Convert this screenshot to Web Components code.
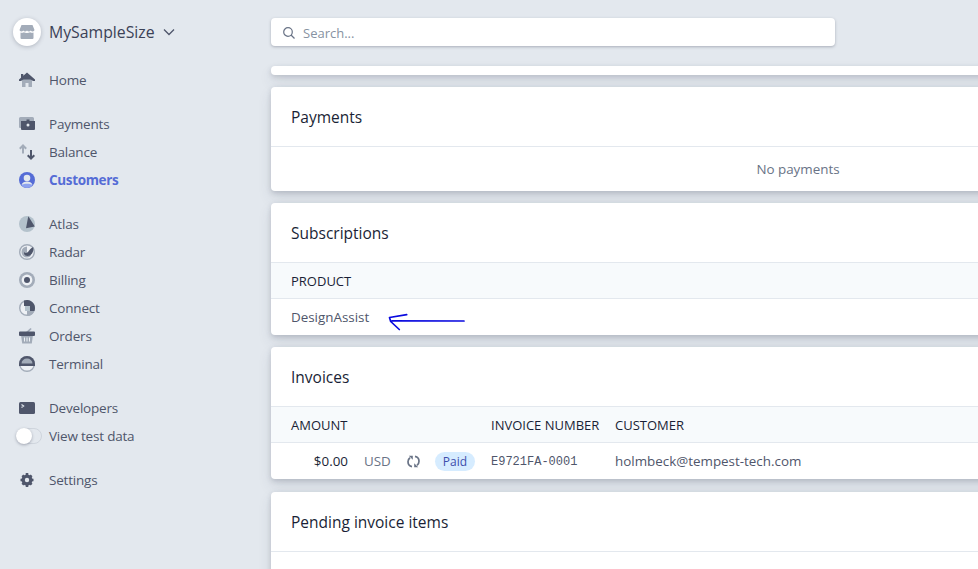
<!DOCTYPE html>
<html lang="en">
<head>
<meta charset="utf-8">
<title>Customer</title>
<style>
  html, body { margin: 0; height: 100%; overflow: hidden; background: #e3e8ee; }
  body { font-family: "Open Sans", "Noto Sans", sans-serif; font-size: 14px; color: #4f566b; }
</style>
</head>
<body>
<app-shell>
  <side-nav slot="nav"></side-nav>
  <search-box slot="search"></search-box>
  <data-card stub></data-card>
  <data-card title="Payments"><p-empty>No payments</p-empty></data-card>
  <data-card title="Subscriptions"><product-table></product-table></data-card>
  <data-card title="Invoices"><invoice-table></invoice-table></data-card>
  <data-card title="Pending invoice items" style="margin-top:1px"><div style="height:80px"></div></data-card>
</app-shell>

<script>
  const ICONS = {
    home: `<path fill="#a3acb9" d="M3 7h10v8H9.500v-4h-3v4H3z"/><path fill="#4f566b" d="M8 .5 16 7.500V9H14L8 4.500 2 9H0V7.500l2-1.800V2h2.300v1.700z"/><path fill="#4f566b" d="M8 2 14 7.500H2z"/>`,
    payments: `<path fill="#a3acb9" d="M0 2.500A1.500 1.500 0 0 1 1.500 1h12A1.500 1.500 0 0 1 15 2.500V5H2v7H1a1 1 0 0 1-1-1z"/><path fill="#4f566b" fill-rule="evenodd" d="M2 5h14v8a1 1 0 0 1-1 1H3a1 1 0 0 1-1-1zm7 2.500a1.500 1.500 0 1 0 0 3 1.500 1.500 0 0 0 0-3zM7.500 3.500h3V5h-3z"/>`,
    balance: `<path fill="none" stroke="#a3acb9" stroke-width="2" d="M4 9.500V1.500M.8 4.700 4 1.500l3.200 3.200"/><path fill="none" stroke="#4f566b" stroke-width="2" d="M12 6v8.500M8.700 11.300 12 14.500l3.300-3.200"/>`,
    customers: `<circle cx="8" cy="8" r="8" fill="#556cd6"/><path fill="#e3e8ee" d="M2.500 12.500c1-2 3-3 5.500-3s4.500 1 5.500 3L8 15z"/><path fill="#8fa3ef" d="M2.300 13.200C4 12 6 11.800 8 11.800s4 .2 5.700 1.400A8 8 0 0 1 8 16a8 8 0 0 1-5.700-2.800z"/><circle cx="8" cy="6" r="3.300" fill="#e3e8ee"/>`,
    atlas: `<circle cx="8" cy="8" r="8" fill="#b4c2cc"/><path fill="#4f566b" d="M9.300.3 15.800 10.500 7 12.300z"/>`,
    radar: `<circle cx="8" cy="8" r="7.300" fill="#eef1f5" stroke="#a3acb9" stroke-width="1.400"/><path fill="#a3acb9" d="M8 2.500a5.500 5.500 0 0 0 0 11 5.500 5.500 0 0 0 4-2L8 8z"/><path fill="#4f566b" d="M14.200 3c.9 4.500-1.500 9-5.700 9A3.700 3.700 0 0 1 5 8c1 1.200 3 1.200 4 0 1.400-1.500 2-3.500 5.200-5z"/>`,
    billing: `<circle cx="8" cy="8" r="8" fill="#a3acb9"/><circle cx="8" cy="8" r="5.400" fill="#eef1f5"/><circle cx="8" cy="8" r="3" fill="#4f566b"/>`,
    connect: `<circle cx="8" cy="8" r="7.300" fill="#eef1f5" stroke="#a3acb9" stroke-width="1.400"/><path fill="#a3acb9" d="M8 11h7.500A8 8 0 0 1 8 16z"/><path fill="#4f566b" d="M5 .6A8 8 0 0 1 16 8c0 1-.2 2-.5 3H11V6H5z"/><path fill="#b4c2cc" d="M6 6h5v5H6z"/>`,
    orders: `<path fill="#a3acb9" d="M2 7h12l-1.200 8.500H3.200z"/><path fill="#eef1f5" d="M5 9.500h1v4H5zm2.500 0h1v4h-1zm2.500 0h1v4h-1z"/><path fill="#a3acb9" d="M6.500 4.500 11.500 0l1.200 1-3.500 3.500z"/><path fill="#4f566b" d="M1 3.500h14a1 1 0 0 1 1 1V7a1 1 0 0 1-1 1H1a1 1 0 0 1-1-1V4.500a1 1 0 0 1 1-1z"/>`,
    terminal: `<circle cx="8" cy="8" r="7.300" fill="#eef1f5" stroke="#a3acb9" stroke-width="1.400"/><path fill="#4f566b" d="M0 8a8 8 0 0 1 16 0v2H0z"/><path fill="#a3acb9" d="M2.500 7.500a5.500 5 0 0 1 11 0z"/>`,
    developers: `<rect y="2" width="16" height="12" rx="1.500" fill="#4f566b"/><path fill="none" stroke="#e3e8ee" stroke-width="1.100" d="M2.500 4.500l2.200 1.500-2.200 1.500"/>`,
    settings: `<circle cx="8" cy="8" r="4" fill="none" stroke="#4f566b" stroke-width="3"/><path stroke="#4f566b" stroke-width="2.600" d="M8 1v14M1.500 8h13M3.400 3.400l9.200 9.200M12.600 3.400l-9.200 9.200"/><circle cx="8" cy="8" r="2.200" fill="#e3e8ee"/>`
  };

  class AppShell extends HTMLElement {
    constructor() {
      super();
      this.attachShadow({mode: 'open'}).innerHTML = `
        <style>
          :host { display: grid; grid-template-columns: 271px 1054px; height: 569px; overflow: hidden; }
          main { display: flex; flex-direction: column; }
          .top { padding-top: 18px; height: 48px; flex: none; }
          .cards { display: flex; flex-direction: column; gap: 12px; }
        </style>
        <slot name="nav"></slot>
        <main>
          <div class="top"><slot name="search"></slot></div>
          <div class="cards"><slot></slot></div>
        </main>`;
    }
  }

  class SideNav extends HTMLElement {
    constructor() {
      super();
      const groups = [
        [['home', 'Home']],
        [['payments', 'Payments'], ['balance', 'Balance'], ['customers', 'Customers', true]],
        [['atlas', 'Atlas'], ['radar', 'Radar'], ['billing', 'Billing'], ['connect', 'Connect'], ['orders', 'Orders'], ['terminal', 'Terminal']],
        [['developers', 'Developers'], [null, 'View test data']],
        [['settings', 'Settings']]
      ];
      const row = ([icon, label, active]) => `
        <div class="row ${active ? 'active' : ''}">
          ${icon ? `<svg width="16" height="16" viewBox="0 0 16 16">${ICONS[icon]}</svg>` : `<span class="toggle"><i></i></span>`}
          <span>${label}</span>
        </div>`;
      this.attachShadow({mode: 'open'}).innerHTML = `
        <style>
          :host { display: flex; flex-direction: column; padding-top: 18px; }
          .brand { display: flex; align-items: center; height: 28px; padding-left: 13px; margin-bottom: 20px; font-size: 15.800px; font-weight: 500; color: #3c4257; }
          .logo { width: 28px; height: 28px; border-radius: 50%; background: #fff; box-shadow: 0 1px 4px rgba(60,66,87,.3); display: flex; align-items: center; justify-content: center; margin-right: 8px; }
          .chev { margin-left: 8px; }
          .group { display: flex; flex-direction: column; margin-bottom: 16px; }
          .row { display: flex; align-items: center; height: 28px; padding-left: 19px; gap: 14px; font-size: 13.500px; letter-spacing: -.2px; }
          .row.active { color: #556cd6; font-weight: 700; letter-spacing: -.35px; }
          .toggle { width: 26px; height: 16px; margin-left: -3px; margin-right: -7px; border: 1px solid #cfd5dd; border-radius: 9px; box-sizing: border-box; position: relative; flex: none; }
          .toggle i { position: absolute; left: -1px; top: -1px; width: 16px; height: 16px; border-radius: 50%; background: #fff; box-shadow: 0 1px 3px rgba(60,66,87,.4); }
        </style>
        <div class="brand">
          <span class="logo"><svg width="16" height="16" viewBox="0 0 16 16"><path fill="#a3acb9" d="M2.500 1h11l2 5a2 2 0 0 1-3.700.5 2.200 2.200 0 0 1-3.800 0 2.200 2.200 0 0 1-3.800 0A2 2 0 0 1 .5 6z"/><path fill="#a3acb9" d="M1.500 8.500c1.300.5 2.500.3 3.300-.3 1.800 1 4.500 1 6.400 0 .8.600 2 .8 3.300.3V14a1 1 0 0 1-1 1h-11a1 1 0 0 1-1-1z"/></svg></span>
          <span>MySampleSize</span>
          <svg class="chev" width="12" height="8" viewBox="0 0 12 8"><path fill="none" stroke="#4f566b" stroke-width="1.300" d="M1 1.500l5 5 5-5"/></svg>
        </div>
        ${groups.map(g => `<div class="group">${g.map(row).join('')}</div>`).join('')}`;
    }
  }

  class SearchBox extends HTMLElement {
    constructor() {
      super();
      this.attachShadow({mode: 'open'}).innerHTML = `
        <style>
          :host { display: flex; align-items: center; width: 564px; height: 28px; background: #fff; border-radius: 4px; box-shadow: 0 1px 3px rgba(60,66,87,.35); padding: 2px 0 0 12px; box-sizing: border-box; gap: 8px; font-size: 13px; color: #8792a2; }
        </style>
        <svg width="12" height="12" viewBox="0 0 12 12"><circle cx="5" cy="5" r="4.300" fill="none" stroke="#697386" stroke-width="1.200"/><path stroke="#697386" stroke-width="1.300" d="M8 8l3.500 3.500"/></svg>
        <span>Search...</span>`;
    }
  }

  class DataCard extends HTMLElement {
    constructor() {
      super();
      const stub = this.hasAttribute('stub');
      const title = this.getAttribute('title');
      this.removeAttribute('title');
      this.attachShadow({mode: 'open'}).innerHTML = `
        <style>
          :host { display: block; background: #fff; border-radius: 4px; box-shadow: 0 2px 5px rgba(60,66,87,.2), 0 7px 14px rgba(60,66,87,.12); }
          :host([stub]) { height: 9px; }
          h2 { margin: 0; height: 60px; box-sizing: border-box; padding-left: 20px; display: flex; align-items: center; font-size: 15.500px; font-weight: 500; color: #1a1f36; border-bottom: 1px solid #e3e8ee; }
        </style>
        ${stub ? '' : `<h2>${title}</h2>`}
        <slot></slot>`;
    }
  }

  class PEmpty extends HTMLElement {
    constructor() {
      super();
      this.attachShadow({mode: 'open'}).innerHTML = `
        <style>
          :host { display: flex; justify-content: center; align-items: center; height: 44px; color: #697386; font-size: 13.400px; }
        </style>
        <slot></slot>`;
    }
  }

  const TABLE_CSS = `
    :host { display: block; }
    .head, .body { display: flex; align-items: center; padding-left: 20px; }
    .head { height: 36px; box-sizing: border-box; background: #f7fafc; border-bottom: 1px solid #e3e8ee; color: #1a1f36; font-size: 13px; font-weight: 500; }
    .body { height: 36px; font-size: 13.400px; }
  `;

  class ProductTable extends HTMLElement {
    constructor() {
      super();
      this.attachShadow({mode: 'open'}).innerHTML = `
        <style>${TABLE_CSS}
          .body { position: relative; }
          .scrawl { position: absolute; left: 117px; top: 12px; }
        </style>
        <div class="head">PRODUCT</div>
        <div class="body">DesignAssist
          <svg class="scrawl" width="80" height="20" viewBox="0 0 80 20"><path fill="none" stroke="#0a0adf" stroke-width="1.700" stroke-linecap="round" stroke-linejoin="round" d="M76 10 4 9.800M18.700 3.700 1.500 6.500 2.700 10.500 11.300 18.500"/></svg>
        </div>`;
    }
  }

  class InvoiceTable extends HTMLElement {
    constructor() {
      super();
      this.attachShadow({mode: 'open'}).innerHTML = `
        <style>${TABLE_CSS}
          .amount { width: 57px; text-align: right; color: #1a1f36; font-weight: 500; flex: none; }
          .h-amount { width: 200px; flex: none; }
          .h-number { width: 124px; flex: none; }
          .cur { margin-left: 16px; width: 43px; color: #697386; flex: none; }
          svg { flex: none; margin-right: 15px; }
          .pill { width: 40px; height: 19px; border-radius: 10px; background: #d6ecff; color: #3d4eac; font-size: 12px; font-weight: 500; display: flex; align-items: center; justify-content: center; margin-right: 16px; flex: none; }
          .num { width: 124px; margin-top: 2px; font-family: "Liberation Mono", monospace; font-size: 12px; flex: none; color: #4f566b; }
        </style>
        <div class="head"><span class="h-amount">AMOUNT</span><span class="h-number">INVOICE NUMBER</span><span>CUSTOMER</span></div>
        <div class="body">
          <span class="amount">$0.00</span>
          <span class="cur">USD</span>
          <svg width="13" height="13" viewBox="0 0 13 13"><path fill="none" stroke="#697386" stroke-width="1.700" d="M5 11.700C2.500 11.200 1 9.200 1 6.800 1 5 1.800 3.600 3 2.700M8 1.300c2.500.5 4 2.500 4 4.900 0 1.800-.8 3.200-2 4.100"/><path fill="#697386" d="M1.800 .8h4v4zM11.200 12.200h-4v-4z"/></svg>
          <span class="pill">Paid</span>
          <span class="num">E9721FA-0001</span>
          <span>holmbeck@tempest-tech.com</span>
        </div>`;
    }
  }

  customElements.define('app-shell', AppShell);
  customElements.define('side-nav', SideNav);
  customElements.define('search-box', SearchBox);
  customElements.define('data-card', DataCard);
  customElements.define('p-empty', PEmpty);
  customElements.define('product-table', ProductTable);
  customElements.define('invoice-table', InvoiceTable);
</script>
</body>
</html>
